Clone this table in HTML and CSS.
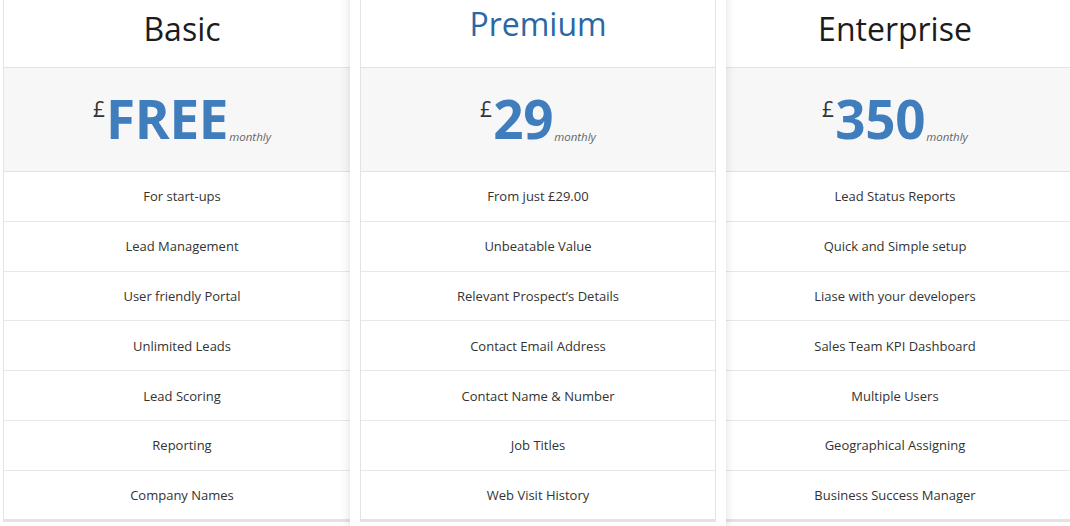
FILE: index.html
```html
<!DOCTYPE html>
<html>
<head>
<meta charset="utf-8">
<link rel="stylesheet" href="styles.css">
</head>
<body>
<div class="plans">
  <div class="plan plan-basic">
    <div class="plan-head">Basic</div>
    <div class="plan-price"><span class="cur">£</span><span class="amt">FREE</span><span class="per">monthly</span></div>
    <ul class="features">
      <li>For start-ups</li>
      <li>Lead Management</li>
      <li>User friendly Portal</li>
      <li>Unlimited Leads</li>
      <li>Lead Scoring</li>
      <li>Reporting</li>
      <li>Company Names</li>
    </ul>
  </div>
  <div class="featured">
    <div class="plan plan-premium">
      <div class="plan-head">Premium</div>
      <div class="plan-price"><span class="cur">£</span><span class="amt">29</span><span class="per">monthly</span></div>
      <ul class="features">
        <li>From just £29.00</li>
        <li>Unbeatable Value</li>
        <li>Relevant Prospect’s Details</li>
        <li>Contact Email Address</li>
        <li>Contact Name &amp; Number</li>
        <li>Job Titles</li>
        <li>Web Visit History</li>
      </ul>
    </div>
  </div>
  <div class="plan plan-enterprise">
    <div class="plan-head">Enterprise</div>
    <div class="plan-price"><span class="cur">£</span><span class="amt">350</span><span class="per">monthly</span></div>
    <ul class="features">
      <li>Lead Status Reports</li>
      <li>Quick and Simple setup</li>
      <li>Liase with your developers</li>
      <li>Sales Team KPI Dashboard</li>
      <li>Multiple Users</li>
      <li>Geographical Assigning</li>
      <li>Business Success Manager</li>
    </ul>
  </div>
</div>
</body>
</html>
```

FILE: styles.css
```css
html, body {
  margin: 0;
  padding: 0;
  background: #fff;
  overflow: hidden;
  width: 1070px;
  height: 526px;
}
body {
  font-family: "Open Sans", "Liberation Sans", sans-serif;
  color: #333;
}
.plans {
  display: flex;
  align-items: flex-start;
  padding-left: 3px;
  width: 1100px;
}
.plan {
  background: #fff;
  border: 1px solid #e3e3e3;
  border-top: none;
  box-sizing: border-box;
}
.plan-basic {
  width: 358px;
  flex: none;
}
.plan-enterprise {
  width: 354px;
  flex: none;
  margin-left: -8px;
}
.featured {
  position: relative;
  z-index: 2;
  flex: none;
  width: 376px;
  margin-left: -11px;
  margin-top: -10px;
  padding: 0 10px 12px;
  box-sizing: border-box;
  background: #fff;
  box-shadow: 0 0 10px rgba(0, 0, 0, 0.13);
}
.plan-premium {
  border-top: 1px solid #e3e3e3;
}
.plan-head {
  display: flex;
  align-items: center;
  justify-content: center;
  font-size: 32px;
  color: #1c1c1c;
  border-bottom: 1px solid #e3e3e3;
  box-sizing: border-box;
  padding-bottom: 10px;
  height: 68px;
}
.plan-premium .plan-head {
  height: 77px;
  padding-bottom: 12px;
  color: #2a67a4;
}
.plan-price {
  height: 104px;
  background: #f7f7f7;
  display: flex;
  align-items: flex-start;
  justify-content: center;
  padding-top: 15px;
  box-sizing: border-box;
  border-bottom: 1px solid #e3e3e3;
}
.cur {
  font-size: 21px;
  color: #333;
  line-height: 1;
  margin-top: 16px;
  margin-right: 1px;
}
.amt {
  font-size: 53px;
  font-weight: 700;
  color: #3f7dbd;
  line-height: 72px;
  letter-spacing: -0.3px;
}
.per {
  align-self: flex-start;
  margin-top: 48px;
  margin-left: 1px;
  font-size: 11.5px;
  font-style: italic;
  color: #666;
  line-height: 1;
}
.features {
  list-style: none;
  margin: 0;
  padding: 0;
}
.features li {
  height: 49.8px;
  display: flex;
  align-items: center;
  justify-content: center;
  font-size: 13px;
  color: #333;
  border-bottom: 1px solid #e8e8e8;
  box-sizing: border-box;
}
.features li:last-child {
  border-bottom: 2px solid #e3e3e3;
}
```
